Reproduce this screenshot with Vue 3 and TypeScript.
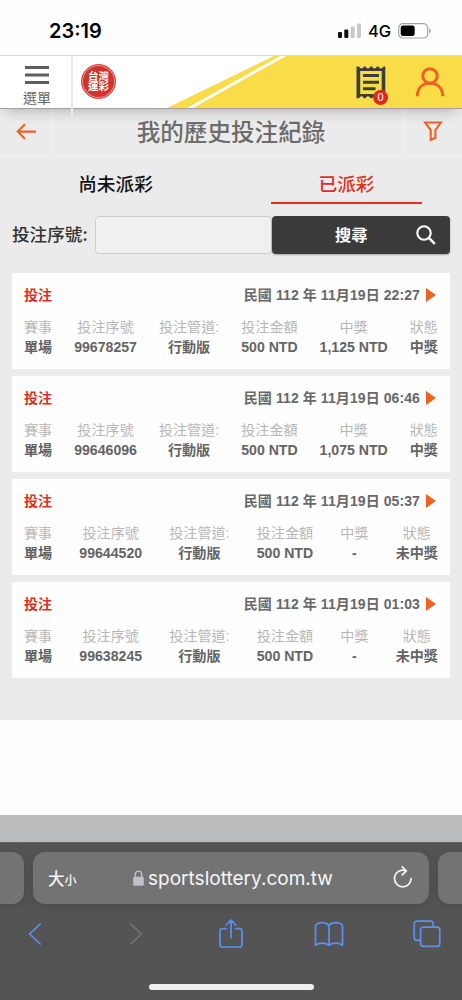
<script setup lang="ts">
interface Field {
  label: string
  value: string
}
interface Bet {
  date: string
  fields: Field[]
}

function bet(date: string, serial: string, won: string, status: string): Bet {
  return {
    date,
    fields: [
      { label: '賽事', value: '單場' },
      { label: '投注序號', value: serial },
      { label: '投注管道:', value: '行動版' },
      { label: '投注金額', value: '500 NTD' },
      { label: '中獎', value: won },
      { label: '狀態', value: status },
    ],
  }
}

const bets: Bet[] = [
  bet('民國 112 年 11月19日 22:27', '99678257', '1,125 NTD', '中獎'),
  bet('民國 112 年 11月19日 06:46', '99646096', '1,075 NTD', '中獎'),
  bet('民國 112 年 11月19日 05:37', '99644520', '-', '未中獎'),
  bet('民國 112 年 11月19日 01:03', '99638245', '-', '未中獎'),
]
</script>

<template>
  <div class="screen">
    <div class="status">
      <span class="clock">23:19</span>
      <span class="status-right">
        <svg width="24" height="16" viewBox="0 0 24 16">
          <rect x="0" y="9" width="4" height="6" rx="1" fill="#111" />
          <rect x="6.3" y="6.5" width="4" height="8.500" rx="1" fill="#111" />
          <rect x="12.7" y="3.5" width="4" height="11.5" rx="1" fill="#c9c9c9" />
          <rect x="19" y="0.5" width="4" height="14.5" rx="1" fill="#c9c9c9" />
        </svg>
        <span class="net">4G</span>
        <svg width="34" height="16" viewBox="0 0 34 16">
          <rect x="0.7" y="0.7" width="29" height="14.3" rx="4.3" fill="none" stroke="#a3a3a3" stroke-width="1.2" />
          <rect x="2.7" y="2.6" width="14" height="10.5" rx="2.4" fill="#000" />
          <path d="M31.2 5.6 Q33 6.4 33 7.9 Q33 9.4 31.2 10.2Z" fill="#a3a3a3" />
        </svg>
      </span>
    </div>

    <header class="brand">
      <div class="menu">
        <svg width="24" height="18" viewBox="0 0 24 18">
          <path d="M0 1.5H24M0 9H24M0 16.5H24" stroke="#5f5f5f" stroke-width="3" />
        </svg>
        <span>選單</span>
      </div>
      <div class="logo"><span>台灣</span><span>運彩</span></div>
      <svg class="swoosh" width="295" height="52" viewBox="167 56 295 52">
        <path d="M167 108L276 55H282L187 108Z M193 108L288 55H462V108Z" fill="#f8dc48" />
      </svg>
      <div class="actions">
        <div class="slip">
          <svg width="30" height="33" viewBox="0 0 30 33">
            <path d="M0.5 0.5H3Q4 2.6 5.5 2.6T8 0.5H9.5Q10.5 2.6 12 2.6T14.5 0.5H16Q17 2.6 18.5 2.6T21 0.5H22.5Q23.5 2.6 25 2.6T27.5 0.5H29.3V32.3H27.5Q26.5 30.2 25 30.2T22.5 32.3H21Q20 30.2 18.5 30.2T16 32.3H14.5Q13.5 30.2 12 30.2T9.5 32.3H8Q7 30.2 5.5 30.2T3 32.3H0.5Z" fill="#3f3d38" />
            <rect x="4.2" y="5" width="21.5" height="23" fill="#f8dc48" />
            <path d="M7 9.5H23M7 16.2H23M7 22.8H19.5" stroke="#3f3d38" stroke-width="3" />
          </svg>
          <span class="badge">0</span>
        </div>
        <svg class="user" width="30" height="30" viewBox="0 0 30 30" fill="none" stroke="#ee6224" stroke-width="3">
          <circle cx="15" cy="9" r="7.2" />
          <path d="M2.2 29.2C2.5 20.5 8 16.3 15 16.3S27.5 20.5 27.8 29.2" />
        </svg>
      </div>
    </header>

    <div class="titlebar">
      <div class="side left">
        <svg width="20" height="18" viewBox="0 0 20 18" fill="none" stroke="#ee6224" stroke-width="2.2">
          <path d="M9 1.3L1.8 8.6L9 15.9M2 8.6H20" />
        </svg>
      </div>
      <h1>我的歷史投注紀錄</h1>
      <div class="side right">
        <svg width="20" height="21" viewBox="0 0 20 21" fill="none" stroke="#ee6224" stroke-width="2.1">
          <path d="M2.1 1.5H17.9L12.4 9V16.8L7.7 19V9Z" />
        </svg>
      </div>
    </div>

    <main>
      <nav class="tabs">
        <div class="tab"><span>尚未派彩</span></div>
        <div class="tab active"><span>已派彩</span></div>
      </nav>
      <div class="search">
        <label for="serial">投注序號:</label>
        <input id="serial" type="text" />
        <button type="button">
          <span>搜尋</span>
          <svg width="20" height="20" viewBox="0 0 20 20" fill="none" stroke="#fff" stroke-width="2.1">
            <circle cx="8" cy="8" r="6.7" />
            <path d="M12.8 12.8L18.8 18.8" stroke-width="2.5" />
          </svg>
        </button>
      </div>
      <section class="list">
        <article v-for="b in bets" :key="b.date" class="card">
          <div class="top">
            <span class="kind">投注</span>
            <span class="date">{{ b.date }}</span>
            <svg width="10" height="14" viewBox="0 0 10 14"><path d="M0 0L10 7L0 14Z" fill="#ee6224" /></svg>
          </div>
          <div class="fields">
            <div v-for="f in b.fields" :key="f.label" class="field">
              <span class="label">{{ f.label }}</span>
              <span class="value">{{ f.value }}</span>
            </div>
          </div>
        </article>
      </section>
    </main>

    <div class="blank"></div>
    <div class="strip"></div>

    <footer>
      <div class="address-row">
        <div class="stub stub-left"></div>
        <div class="address">
          <span class="size">大<small>小</small></span>
          <span class="url">
            <svg width="11" height="16" viewBox="0 0 11 16">
              <rect x="0.2" y="6.8" width="10.6" height="9" rx="1.4" fill="#c1bfc8" />
              <path d="M2.3 7V4.3A3.2 3.2 0 0 1 8.7 4.3V7" fill="none" stroke="#c1bfc8" stroke-width="1.4" />
            </svg>
            <span>sportslottery.com.tw</span>
          </span>
          <svg class="reload" width="20" height="22" viewBox="0 0 20 22" fill="none" stroke="#f4f4f4" stroke-width="1.7" stroke-linecap="round" stroke-linejoin="round">
            <path d="M12.6 4.6C6.500 3 1.5 7 1.5 12.6A8.3 8.3 0 0 0 18.1 12.6M9.3 .9L13.300 4.900L9.3 8.900" />
          </svg>
        </div>
        <div class="stub stub-right"></div>
      </div>
      <div class="tools">
        <svg width="14" height="22" viewBox="0 0 14 22"><path d="M12.2 1L1.6 11L12.2 21" /></svg>
        <svg class="off" width="20" height="22" viewBox="0 0 20 22"><path d="M7.8 1L18.4 11L7.8 21" /></svg>
        <svg width="24" height="30" viewBox="0 0 24 30"><path d="M7.3 9.7H3.2Q1 9.7 1 12V25.5Q1 28 3.4 28H20.6Q23 28 23 25.5V12Q23 9.7 20.8 9.7H16.7M12 19V1.6M7.2 6L12 1.2L16.8 6" /></svg>
        <svg width="30" height="26" viewBox="0 0 30 26"><path d="M15 4.3C11.5 .8 4.5 .8 1.5 4.3V24.3C5 21.3 11.5 21.3 15 24.3C18.5 21.3 25 21.3 28.5 24.3V4.3C25.5 .8 18.5 .8 15 4.3V24.3" /></svg>
        <svg width="28" height="28" viewBox="0 0 28 28"><path d="M7.5 20.3H4Q1.2 20.3 1.2 17.5V4Q1.2 1.2 4 1.2H17.5Q20.3 1.2 20.3 4V7.2" /><rect x="7.6" y="7.2" width="19.2" height="19.2" rx="2.8" /></svg>
      </div>
      <div class="home"></div>
    </footer>
  </div>
</template>

<style>
body {
  margin: 0;
}
</style>

<style scoped>
* {
  box-sizing: border-box;
}
.screen {
  width: 462px;
  height: 1000px;
  overflow: hidden;
  display: flex;
  flex-direction: column;
  background: #fefefe;
  font-family: "Liberation Sans", "Noto Sans CJK TC", sans-serif;
}
svg {
  display: block;
  flex: none;
}
.status {
  height: 55px;
  flex: none;
  display: flex;
  justify-content: space-between;
  align-items: center;
  padding: 7px 30px 0 49px;
  font-family: Inter, sans-serif;
  color: #000;
}
.clock {
  font-size: 20px;
  font-weight: 600;
  line-height: 24px;
}
.status-right {
  display: flex;
  align-items: center;
}
.net {
  font-size: 16.5px;
  font-weight: 500;
  margin: 0 7px 0 6.5px;
  width: 23px;
  line-height: 20px;
}
.brand {
  position: relative;
  z-index: 1;
  height: 54px;
  flex: none;
  display: flex;
  align-items: flex-start;
  background: #fff;
  border-top: 1px solid #dcdcdc;
  border-bottom: 1px solid #a2a2a2;
  box-shadow: 0 7px 12px -5px rgba(0, 0, 0, 0.24);
}
.menu {
  width: 73px;
  height: 61px;
  flex: none;
  padding: 10px 0 0 3px;
  display: flex;
  flex-direction: column;
  align-items: center;
  border-right: 2px solid #e9e9e9;
  color: #666;
  font-size: 14px;
  line-height: 18px;
  gap: 5px;
}
.logo {
  width: 35px;
  height: 35px;
  flex: none;
  margin: 8px 0 0 8px;
  border-radius: 50%;
  background: #cf3430;
  border: 1px solid #d64b47;
  box-shadow: inset 0 0 0 1px #e79a97;
  display: flex;
  flex-direction: column;
  align-items: center;
  justify-content: center;
  padding-bottom: 1px;
  color: #fff;
  font-size: 10.5px;
  font-weight: 700;
  line-height: 10px;
}
.swoosh {
  position: absolute;
  right: 0;
  top: 0;
}
.actions {
  position: relative;
  margin-left: auto;
  display: flex;
  padding: 10px 17px 0 0;
  gap: 29px;
}
.slip {
  position: relative;
}
.badge {
  position: absolute;
  left: 17px;
  top: 24px;
  width: 15px;
  height: 15px;
  border-radius: 50%;
  background: #e0291f;
  color: #fff;
  font-size: 11px;
  line-height: 15px;
  text-align: center;
}
.user {
  margin-top: 1px;
}
.titlebar {
  height: 47px;
  flex: none;
  display: flex;
  align-items: stretch;
  background: #ebebeb;
  border-bottom: 1px solid #f1f1f1;
}
.side {
  width: 53px;
  display: flex;
  justify-content: center;
}
.side.left {
  border-right: 1px solid #f3f3f3;
  padding-top: 14px;
}
.side.right {
  width: 59px;
  border-left: 1px solid #f3f3f3;
  padding-top: 12px;
}
h1 {
  flex: 1;
  margin: 0;
  padding-left: 6px;
  text-align: center;
  color: #6c6c6c;
  font-size: 23.6px;
  font-weight: 500;
  line-height: 49px;
}
main {
  height: 564px;
  flex: none;
  background: #ebebeb;
}
.tabs {
  display: flex;
  height: 48px;
}
.tab {
  flex: 1;
  display: flex;
  justify-content: center;
  font-size: 18.7px;
  font-weight: 500;
  line-height: 57px;
  color: #111;
}
.tab.active {
  color: #e0301f;
}
.tab.active span {
  width: 151px;
  height: 48px;
  text-align: center;
  border-bottom: 2.5px solid #e0301f;
}
.search {
  display: flex;
  height: 38px;
  margin: 12px 12px 0;
}
label {
  width: 83px;
  white-space: nowrap;
  font-family: "Noto Sans CJK TC", sans-serif;
  font-size: 17.6px;
  font-weight: 500;
  line-height: 35px;
  color: #333;
}
input {
  width: 177px;
  min-width: 0;
  border: 1px solid #cdcdcd;
  border-radius: 4px;
  background: #f0f0f0;
  outline: none;
}
button {
  flex: 1;
  border: 0;
  border-radius: 4px;
  background: #3a3a3a;
  color: #fff;
  font: 700 16.3px/36px "Liberation Sans", "Noto Sans CJK TC", sans-serif;
  display: flex;
  align-items: center;
  padding: 0 14px 0 63px;
  justify-content: space-between;
  box-shadow: 0 1px 2px rgba(0, 0, 0, 0.3);
}
.list {
  display: flex;
  flex-direction: column;
  gap: 7px;
  margin: 18.5px 12px 0;
}
.card {
  height: 96px;
  padding: 12px 12px 0;
  background: #fefefe;
}
.top {
  display: flex;
  align-items: center;
  height: 20px;
  font-size: 14px;
  font-weight: 700;
  line-height: 20px;
}
.kind {
  color: #dc3023;
}
.date {
  margin: 0 6px 0 auto;
  letter-spacing: 0.09px;
  color: #686868;
}
.top svg {
  margin-right: 2px;
}
.fields {
  display: flex;
  justify-content: space-between;
  margin-top: 12.5px;
}
.field {
  display: flex;
  flex-direction: column;
  align-items: center;
  font-size: 14.1px;
  line-height: 20px;
  white-space: nowrap;
}
.label {
  color: #b7b7b7;
}
.value {
  font-weight: 700;
  color: #646464;
}
.blank {
  height: 95px;
  flex: none;
}
.strip {
  height: 27px;
  flex: none;
  background: #bbbcbe;
}
footer {
  flex: 1;
  background: #545454;
  padding-top: 9px;
  border-top: 1px solid #626262;
}
.address-row {
  display: flex;
  justify-content: space-between;
  height: 52px;
}
.stub,
.address {
  background: #737373;
  box-shadow: 0 2px 10px rgba(0, 0, 0, 0.12);
}
.stub {
  width: 24px;
}
.stub-left {
  border-radius: 0 12px 12px 0;
}
.stub-right {
  border-radius: 12px 0 0 12px;
}
.address {
  width: 396px;
  border-radius: 12px;
  display: flex;
  align-items: center;
  padding: 0 16px 0 15px;
  color: #f6f6f6;
}
.size {
  width: 85px;
  padding-top: 3px;
  font-size: 16.5px;
  font-weight: 500;
  line-height: 24px;
}
.size small {
  font-size: 12px;
}
.url {
  display: flex;
  align-items: center;
  gap: 4px;
  padding-top: 1px;
  font: 400 19.05px/24px Inter, sans-serif;
}
.url svg {
  margin-bottom: 1px;
}
.reload {
  margin-left: auto;
  margin-bottom: 2px;
}
.tools {
  display: grid;
  grid-template-columns: repeat(5, 98px);
  justify-items: center;
  align-items: center;
  height: 30px;
  margin: 15px 0 0 -14.5px;
  fill: none;
  stroke: #5c90f0;
  stroke-width: 1.7px;
  stroke-linecap: round;
  stroke-linejoin: round;
}
.tools .off {
  stroke: #757575;
}
.home {
  width: 165px;
  height: 6px;
  margin: 35px auto 0;
  border-radius: 3px;
  background: #efefef;
}
</style>
